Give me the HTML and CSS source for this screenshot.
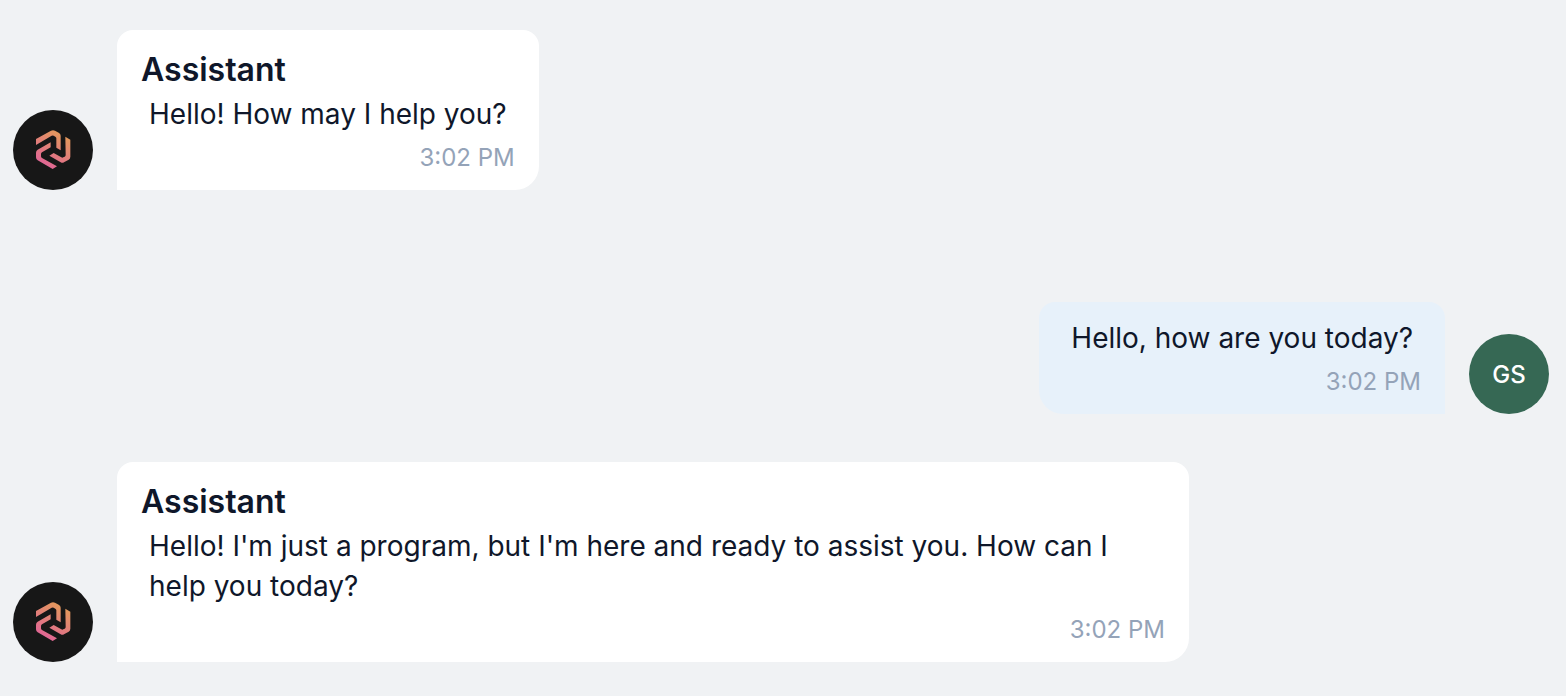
FILE: index.html
```html
<!DOCTYPE html>
<html lang="en">
<head>
<meta charset="utf-8">
<meta name="viewport" content="width=device-width, initial-scale=1">
<title>Chat</title>
<link rel="stylesheet" href="styles.css">
</head>
<body>
<svg class="defs" aria-hidden="true">
  <defs>
    <linearGradient id="logo-gradient" gradientUnits="userSpaceOnUse" x1="40" y1="125" x2="105" y2="15">
      <stop offset="0" stop-color="#e0629a"/>
      <stop offset="1" stop-color="#e39e55"/>
    </linearGradient>
    <symbol id="logo" viewBox="-45 -45 240 240">
      <g fill="url(#logo-gradient)">
        <path d="M24 42 69 17Q75 14 81 17L92 23Q98 26 98 32V76L85 68V40Q85 37 82 35L77 32Q74 31 71 32L24 60Z"/>
        <path d="M112 35 127 44V95Q127 101 122 104L108 112Q103 115 98 112L64 92 77 84 100 97Q103 99 106 97L110 95Q113 93 113 90Z"/>
        <path d="M68 52V67L42 82Q39 84 39 87V94Q39 97 42 99L87 124 74 132 29 106Q24 103 24 97V83Q24 77 29 74Z"/>
      </g>
    </symbol>
  </defs>
</svg>
<main class="chat">
  <article class="message message-first">
    <div class="avatar avatar-assistant"><svg class="avatar-logo" role="img" aria-label="Assistant"><use href="#logo"/></svg></div>
    <div class="bubble">
      <h2 class="name">Assistant</h2>
      <p class="text">Hello! How may I help you?</p>
      <time class="time">3:02 PM</time>
    </div>
  </article>
  <article class="message message-user">
    <div class="avatar avatar-user">GS</div>
    <div class="bubble bubble-user">
      <p class="text">Hello, how are you today?</p>
      <time class="time">3:02 PM</time>
    </div>
  </article>
  <article class="message">
    <div class="avatar avatar-assistant"><svg class="avatar-logo" role="img" aria-label="Assistant"><use href="#logo"/></svg></div>
    <div class="bubble">
      <h2 class="name">Assistant</h2>
      <p class="text">Hello! I'm just a program, but I'm here and ready to assist you. How can I help you today?</p>
      <time class="time">3:02 PM</time>
    </div>
  </article>
</main>
</body>
</html>
```
FILE: styles.css
```css
* {
  box-sizing: border-box;
}

body {
  margin: 0;
  min-height: 100vh;
  background: #f0f2f4;
  color: #0f172a;
  font-family: Inter, "Liberation Sans", sans-serif;
}

.defs {
  position: absolute;
  width: 0;
  height: 0;
}

.chat {
  display: flex;
  flex-direction: column;
  gap: 48px;
  padding: 30px 17px 34px 13px;
}

.message {
  display: flex;
  align-items: flex-end;
  gap: 24px;
}

.message-first {
  margin-bottom: 64px;
}

.message-user {
  flex-direction: row-reverse;
}

.avatar {
  display: flex;
  flex: none;
  align-items: center;
  justify-content: center;
  width: 80px;
  height: 80px;
  border-radius: 50%;
}

.avatar-assistant {
  background: #171717;
}

.avatar-user {
  background: #366854;
  color: #fff;
  font-size: 24px;
  font-weight: 500;
}

.avatar-logo {
  width: 80px;
  height: 80px;
}

.bubble {
  display: flex;
  flex-direction: column;
  max-width: 1072px;
  padding: 16px 24px;
  border-radius: 16px 16px 24px 0;
  background: #fff;
}

.bubble-user {
  border-radius: 16px 16px 0 24px;
  background: #e7f1fa;
}

.name {
  margin: 0;
  font-size: 32px;
  font-weight: 600;
  line-height: 48px;
}

.text {
  margin: 0;
  padding: 0 8px;
  font-size: 28px;
  line-height: 40px;
}

.time {
  align-self: flex-end;
  margin-top: 8px;
  color: #94a3b8;
  font-size: 24px;
  line-height: 32px;
}
```
